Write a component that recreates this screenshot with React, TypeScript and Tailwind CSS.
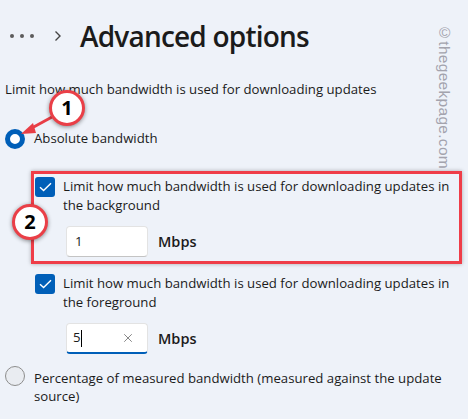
import { X } from "lucide-react";

const font = { fontFamily: '"Open Sans", "Noto Sans", sans-serif' };

function Check() {
  return (
    <div className="w-5 h-5 shrink-0 rounded-[3px] bg-[#005fb8] flex items-center justify-center">
      <svg width="13" height="10" viewBox="0 0 13 10" fill="none">
        <path d="M1 5.2 L4.6 8.6 L12 1.2" stroke="white" strokeWidth="1.4" />
      </svg>
    </div>
  );
}

function Badge({ n, className }: { n: string; className: string }) {
  return (
    <div
      className={
        "absolute w-9 h-9 rounded-full bg-white border-[3px] border-[#ea3f47] shadow-[0_1px_4px_rgba(0,0,0,0.45)] flex items-center justify-center text-[20px] font-bold text-black " +
        className
      }
    >
      {n}
    </div>
  );
}

export default function App() {
  return (
    <div
      style={font}
      className="relative w-[468px] h-[419px] overflow-hidden bg-[#eef2f9] text-[#1b1b1b] pl-[5px]"
    >
      {/* header */}
      <div className="flex items-center h-9 mt-[18px]">
        <div className="flex gap-[6px] ml-[5px]">
          <span className="w-[4px] h-[4px] rounded-full bg-[#5c5c5c]" />
          <span className="w-[4px] h-[4px] rounded-full bg-[#5c5c5c]" />
          <span className="w-[4px] h-[4px] rounded-full bg-[#5c5c5c]" />
        </div>
        <svg className="ml-[20px]" width="8" height="12" viewBox="0 0 8 12" fill="none">
          <path d="M1.5 1.5 L6 6 L1.5 10.5" stroke="#444" strokeWidth="1.4" />
        </svg>
        <h1 className="ml-[18px] text-[28px] font-semibold leading-9 tracking-[-0.8px]">
          Advanced options
        </h1>
      </div>

      <p className="mt-[25px] text-[13.2px] leading-5">
        Limit how much bandwidth is used for downloading updates
      </p>

      {/* absolute radio */}
      <div className="mt-[30px] flex items-center h-5">
        <div className="w-5 h-5 rounded-full border-[5px] border-[#005fb8] bg-white" />
        <span className="ml-[9px] text-[13.2px]">Absolute bandwidth</span>
      </div>

      {/* highlighted group */}
      <div className="mt-[22px] ml-[26px] w-[431px] border-[3px] border-[#ef3d48] shadow-[0_0_4px_rgba(0,0,0,0.3)] pt-[3px] pb-[4px]">
        <div className="flex">
          <div className="ml-px">
            <Check />
          </div>
          <p className="ml-2 text-[13.2px] leading-[19px]">
            Limit how much bandwidth is used for downloading updates in the background
          </p>
        </div>
        <div className="flex items-center mt-[11px] ml-[32px]">
          <div className="w-[82px] h-[31px] bg-white rounded-[4px] border border-[#e3e3e3] border-b-[#c4c4c4] flex items-center pl-2 text-[13.2px]">
            1
          </div>
          <span className="ml-[10px] text-[14.5px] font-semibold">Mbps</span>
        </div>
      </div>

      {/* foreground group */}
      <div className="mt-[10px] ml-[30px] w-[425px]">
        <div className="flex">
          <Check />
          <p className="ml-2 text-[13.2px] leading-[19px]">
            Limit how much bandwidth is used for downloading updates in the foreground
          </p>
        </div>
        <div className="flex items-center mt-[11px] ml-[31px]">
          <div className="w-[82px] h-[31px] bg-white rounded-[4px] border border-[#e3e3e3] border-b-2 border-b-[#005fb8] flex items-center pl-[6px] text-[13.2px]">
            <span>5</span>
            <span className="w-px h-[17px] bg-black" />
            <X size={14} strokeWidth={1.2} className="ml-auto mr-[12px] text-[#555]" />
          </div>
          <span className="ml-[10px] text-[14.5px] font-semibold">Mbps</span>
        </div>
      </div>

      {/* percentage radio */}
      <div className="mt-[15px] flex items-start">
        <div className="mt-[-3px] w-5 h-5 shrink-0 rounded-full border border-[#8d8d8d] bg-[#e9ecf1]" />
        <p className="ml-[9px] text-[13.2px] leading-[18px]">
          Percentage of measured bandwidth (measured against the update source)
        </p>
      </div>

      {/* watermark */}
      <div
        className="absolute left-[433px] top-[24px] text-[15.5px] tracking-[0.3px] text-[#a3a3ad] [writing-mode:vertical-rl]"
        style={{ fontFamily: '"Liberation Sans", Arial, sans-serif' }}
      >
        ©thegeekpage.com
      </div>

      {/* annotations */}
      <svg className="absolute left-0 top-0" width="468" height="419" viewBox="0 0 468 419">
        <path d="M52 117 L30 129" stroke="#e83e46" strokeWidth="3" />
        <path d="M21 134 L33 123 L36 133 Z" fill="#e83e46" />
      </svg>
      <Badge n="1" className="left-[49px] top-[90px]" />
      <Badge n="2" className="left-[12px] top-[204px]" />
    </div>
  );
}
